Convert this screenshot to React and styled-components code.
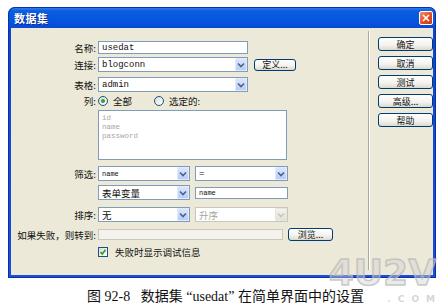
import React from 'react';
import styled, { createGlobalStyle } from 'styled-components';

const GlobalStyle = createGlobalStyle`
  html, body {
    margin: 0;
    padding: 0;
    background: #fff;
  }
  body {
    font-family: "Noto Sans CJK SC", "Liberation Sans", sans-serif;
  }
`;

const Page = styled.div`
  position: relative;
  width: 447px;
  height: 308px;
  box-sizing: border-box;
  padding: 7px 0 0 8px;
  overflow: hidden;
`;

const Window = styled.div`
  width: 428px;
  height: 271px;
  box-sizing: border-box;
  display: flex;
  flex-direction: column;
  padding: 0 3px 3px;
  border-radius: 7px 7px 0 0;
  background: linear-gradient(180deg, #3d86f5 0px, #0a5ddf 4px, #0653de 16px, #0a48d2 21px, #1a4fd6 100%);
  box-shadow: inset 0 0 0 1px #0b2fa8;
`;

const TitleBar = styled.div`
  height: 21px;
  display: flex;
  align-items: center;
  justify-content: space-between;
  padding-left: 3px;
`;

const Title = styled.span`
  color: #fff;
  font-size: 11px;
  font-weight: bold;
  letter-spacing: 0.5px;
  text-shadow: 1px 1px 0 #0a2a8a;
`;

const CloseButton = styled.div`
  width: 14px;
  height: 14px;
  box-sizing: border-box;
  border: 1px solid #fff;
  border-radius: 2px;
  background: linear-gradient(135deg, #f2906a, #e0491f 60%, #c33a12);
  display: flex;
  align-items: center;
  justify-content: center;
`;

const Body = styled.div`
  flex: 1;
  display: flex;
  background: #ece9d8;
`;

const Form = styled.div`
  width: 352px;
  box-sizing: border-box;
  padding: 13px 0 0 5px;
  display: flex;
  flex-direction: column;
`;

const Row = styled.div`
  display: flex;
  align-items: center;
  height: ${p => p.$h}px;
  margin-top: ${p => p.$gap || 0}px;
`;

const Label = styled.div`
  width: 80px;
  margin-right: 2px;
  flex-shrink: 0;
  text-align: right;
  font-size: 9.5px;
  color: #111;
  white-space: nowrap;
`;

const TextField = styled.div`
  width: ${p => p.$w}px;
  height: ${p => p.$h || 13}px;
  box-sizing: border-box;
  border: 1px solid ${p => (p.$disabled ? '#c9c7ba' : '#7f9db9')};
  background: ${p => (p.$disabled ? '#f3f2ec' : '#fff')};
  display: flex;
  align-items: center;
  padding-left: 3px;
  font-family: "Liberation Mono", monospace;
  font-size: ${p => p.$fs || 9}px;
  color: #111;
  margin-left: ${p => p.$ml || 0}px;
`;

const Select = styled.div`
  width: ${p => p.$w}px;
  height: 15px;
  box-sizing: border-box;
  border: 1px solid ${p => (p.$disabled ? '#c9c7ba' : '#7f9db9')};
  background: #fff;
  display: flex;
  align-items: center;
  margin-left: ${p => p.$ml || 0}px;
`;

const SelectValue = styled.div`
  flex: 1;
  padding-left: 3px;
  font-family: ${p => (p.$cjk ? '"Noto Sans CJK SC", sans-serif' : '"Liberation Mono", monospace')};
  font-size: ${p => p.$fs || 9}px;
  color: ${p => (p.$disabled ? '#a7a69c' : '#111')};
  white-space: nowrap;
`;

const ArrowBox = styled.div`
  width: 12px;
  height: 13px;
  box-sizing: border-box;
  border: 1px solid ${p => (p.$disabled ? '#e8e6dc' : '#e2eafb')};
  border-radius: 1px;
  background: ${p => (p.$disabled
    ? 'linear-gradient(180deg, #f4f3ee, #e4e2d8)'
    : 'linear-gradient(180deg, #dbe6fd, #b9cdf7)')};
  display: flex;
  align-items: center;
  justify-content: center;
`;

const XPButton = styled.div`
  width: ${p => p.$w}px;
  height: ${p => p.$h || 14}px;
  box-sizing: border-box;
  margin-left: ${p => p.$ml || 0}px;
  border: 1px solid #003c74;
  border-radius: 3px;
  background: linear-gradient(180deg, #ffffff, #f3f2ee 60%, #dcd8cd);
  display: flex;
  align-items: center;
  justify-content: center;
  font-size: 9px;
  color: #111;
  white-space: nowrap;
`;

const Radio = styled.div`
  width: 10px;
  height: 10px;
  box-sizing: border-box;
  border-radius: 50%;
  border: 1px solid #1c5180;
  background: linear-gradient(135deg, #dcdcd6, #fff);
  display: flex;
  align-items: center;
  justify-content: center;
  margin-left: ${p => p.$ml || 0}px;
  &::after {
    content: '';
    width: 4px;
    height: 4px;
    border-radius: 50%;
    background: ${p => (p.$on ? '#2aa52a' : 'transparent')};
  }
`;

const OptionText = styled.span`
  font-size: 9.5px;
  color: #111;
  margin-left: ${p => p.$ml || 5}px;
  white-space: nowrap;
`;

const ListBox = styled.div`
  width: 189px;
  height: 50px;
  box-sizing: border-box;
  border: 1px solid #7f9db9;
  background: #fff;
  padding: 3px 0 0 3px;
  display: flex;
  flex-direction: column;
  gap: 1px;
  font-family: "Liberation Mono", monospace;
  font-size: 7.5px;
  line-height: 8px;
  color: #a8a8a8;
`;

const Check = styled.div`
  width: 10px;
  height: 10px;
  box-sizing: border-box;
  border: 1px solid #1c5180;
  background: linear-gradient(135deg, #dcdcd6, #fff);
  display: flex;
  align-items: center;
  justify-content: center;
`;

const Separator = styled.div`
  width: 0;
  margin: 3px 0 5px 11px;
  border-left: 1px solid #aca899;
  border-right: 1px solid #fff;
`;

const ButtonColumn = styled.div`
  display: flex;
  flex-direction: column;
  gap: 5px;
  padding: 9px 0 0 8px;
`;

const Caption = styled.div`
  margin-top: 11px;
  padding-right: 4px;
  text-align: center;
  font-family: "Liberation Serif", "Noto Sans CJK SC", serif;
  font-size: 14px;
  line-height: 16px;
  color: #111;
  white-space: pre;
`;

const Watermark = styled.div`
  position: absolute;
  right: 11px;
  bottom: 4px;
  display: flex;
  flex-direction: column;
  align-items: flex-end;
  gap: 1px;
  pointer-events: none;
`;

const WatermarkLogo = styled.span`
  font-family: "DejaVu Sans", sans-serif;
  font-weight: bold;
  font-size: 36px;
  line-height: normal;
  color: rgba(210, 210, 210, 0.45);
  -webkit-text-stroke: 1.5px rgba(185, 185, 185, 0.75);
`;

const WatermarkSub = styled.span`
  font-family: "DejaVu Sans", sans-serif;
  font-weight: bold;
  font-size: 9px;
  line-height: 10px;
  letter-spacing: 7px;
  margin-right: -6px;
  color: rgba(200, 200, 200, 0.75);
`;

const Chevron = ({ disabled }) => (
  <svg width="8" height="6" viewBox="0 0 8 6">
    <polyline
      points="1,1.5 4,4.5 7,1.5"
      fill="none"
      stroke={disabled ? '#c9c7ba' : '#4d6185'}
      strokeWidth="1.6"
    />
  </svg>
);

const Dropdown = ({ w, value, ml, cjk, fs, disabled }) => (
  <Select $w={w} $ml={ml} $disabled={disabled}>
    <SelectValue $cjk={cjk} $fs={fs} $disabled={disabled}>{value}</SelectValue>
    <ArrowBox $disabled={disabled}>
      <Chevron disabled={disabled} />
    </ArrowBox>
  </Select>
);

const sideButtons = ['确定', '取消', '测试', '高级...', '帮助'];

export default function App() {
  return (
    <Page>
      <GlobalStyle />
      <Window>
        <TitleBar>
          <Title>数据集</Title>
          <CloseButton>
            <svg width="8" height="8" viewBox="0 0 8 8">
              <path d="M1 1 L7 7 M7 1 L1 7" stroke="#fff" strokeWidth="1.6" />
            </svg>
          </CloseButton>
        </TitleBar>
        <Body>
          <Form>
            <Row $h={13}>
              <Label>名称:</Label>
              <TextField $w={150}>usedat</TextField>
            </Row>
            <Row $h={15} $gap={3}>
              <Label>连接:</Label>
              <Dropdown w={150} value="blogconn" />
              <XPButton $w={42} $h={12} $ml={6}>定义...</XPButton>
            </Row>
            <Row $h={15} $gap={5}>
              <Label>表格:</Label>
              <Dropdown w={150} value="admin" />
            </Row>
            <Row $h={12} $gap={3}>
              <Label>列:</Label>
              <Radio $on />
              <OptionText>全部</OptionText>
              <Radio $ml={22} />
              <OptionText>选定的:</OptionText>
            </Row>
            <Row $h={50} $gap={3}>
              <Label />
              <ListBox>
                <span>id</span>
                <span>name</span>
                <span>password</span>
              </ListBox>
            </Row>
            <Row $h={15} $gap={6}>
              <Label>筛选:</Label>
              <Dropdown w={92} value="name" fs={7} />
              <Dropdown w={93} value="=" ml={5} />
            </Row>
            <Row $h={15} $gap={4}>
              <Label />
              <Dropdown w={92} value="表单变量" cjk fs={9.5} />
              <TextField $w={93} $h={12} $ml={5} $fs={7}>name</TextField>
            </Row>
            <Row $h={15} $gap={7}>
              <Label>排序:</Label>
              <Dropdown w={92} value="无" cjk fs={9.5} />
              <Dropdown w={93} value="升序" cjk fs={9.5} ml={5} disabled />
            </Row>
            <Row $h={13} $gap={6}>
              <Label>如果失败，则转到:</Label>
              <TextField $w={185} $h={11} $disabled />
              <XPButton $w={45} $h={13} $ml={5}>浏览...</XPButton>
            </Row>
            <Row $h={11} $gap={5}>
              <Label />
              <Check>
                <svg width="8" height="8" viewBox="0 0 8 8">
                  <polyline points="1.5,4 3.3,6 6.5,1.8" fill="none" stroke="#21a121" strokeWidth="1.6" />
                </svg>
              </Check>
              <OptionText $ml={7}>失败时显示调试信息</OptionText>
            </Row>
          </Form>
          <Separator />
          <ButtonColumn>
            {sideButtons.map(label => (
              <XPButton key={label} $w={55}>{label}</XPButton>
            ))}
          </ButtonColumn>
        </Body>
      </Window>
      <Caption>{'图 92-8   数据集 “usedat” 在简单界面中的设置'}</Caption>
      <Watermark>
        <WatermarkLogo>4U2V</WatermarkLogo>
        <WatermarkSub>.COM</WatermarkSub>
      </Watermark>
    </Page>
  );
}
